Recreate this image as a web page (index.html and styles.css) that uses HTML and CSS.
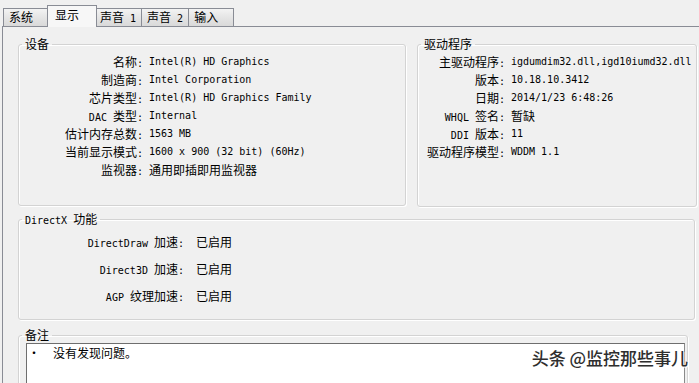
FILE: index.html
```html
<!DOCTYPE html>
<html lang="zh-CN">
<head>
    <meta charset="UTF-8">
    <title>DirectX 诊断工具 - 显示</title>
    <link rel="stylesheet" href="styles.css">
</head>
<body>

<div class="tabs">
    <div class="tab">系统</div>
    <div class="tab active">显示</div>
    <div class="tab">声音<span class="en"> 1</span></div>
    <div class="tab">声音<span class="en"> 2</span></div>
    <div class="tab">输入</div>
</div>

<div class="panel">
    <div class="top-row">
        <fieldset class="group device">
            <legend>设备</legend>
            <div class="rows">
                <div class="label">名称<span class="en">:</span></div>
                <div class="en">Intel(R) HD Graphics</div>
                <div class="label">制造商<span class="en">:</span></div>
                <div class="en">Intel Corporation</div>
                <div class="label">芯片类型<span class="en">:</span></div>
                <div class="en">Intel(R) HD Graphics Family</div>
                <div class="label"><span class="en">DAC </span>类型<span class="en">:</span></div>
                <div class="en">Internal</div>
                <div class="label">估计内存总数<span class="en">:</span></div>
                <div class="en">1563 MB</div>
                <div class="label">当前显示模式<span class="en">:</span></div>
                <div class="en">1600 x 900 (32 bit) (60Hz)</div>
                <div class="label">监视器<span class="en">:</span></div>
                <div>通用即插即用监视器</div>
            </div>
        </fieldset>

        <fieldset class="group driver">
            <legend>驱动程序</legend>
            <div class="rows">
                <div class="label">主驱动程序<span class="en">:</span></div>
                <div class="en">igdumdim32.dll,igd10iumd32.dll</div>
                <div class="label">版本<span class="en">:</span></div>
                <div class="en">10.18.10.3412</div>
                <div class="label">日期<span class="en">:</span></div>
                <div class="en">2014/1/23 6:48:26</div>
                <div class="label"><span class="en">WHQL </span>签名<span class="en">:</span></div>
                <div>暂缺</div>
                <div class="label"><span class="en">DDI </span>版本<span class="en">:</span></div>
                <div class="en">11</div>
                <div class="label">驱动程序模型<span class="en">:</span></div>
                <div class="en">WDDM 1.1</div>
            </div>
        </fieldset>
    </div>

    <fieldset class="group directx">
        <legend><span class="en">DirectX </span>功能</legend>
        <div class="rows">
            <div class="label"><span class="en">DirectDraw </span>加速<span class="en">:</span></div>
            <div>已启用</div>
            <div class="label"><span class="en">Direct3D </span>加速<span class="en">:</span></div>
            <div>已启用</div>
            <div class="label"><span class="en">AGP </span>纹理加速<span class="en">:</span></div>
            <div>已启用</div>
        </div>
    </fieldset>

    <fieldset class="group notes">
        <legend>备注</legend>
        <div class="notes-box">
            <div class="note"><span class="bullet">•</span>没有发现问题。</div>
        </div>
    </fieldset>
</div>

<div class="watermark">头条 @监控那些事儿</div>

</body>
</html>
```

FILE: styles.css
```css
body {
    margin: 0;
    background-color: #f0f0f0;
    font-family: "Noto Sans CJK SC", sans-serif;
    font-size: 12px;
    color: #000;
    overflow: hidden;
}

.en {
    font-family: "DejaVu Sans Mono", monospace;
    font-size: 10px;
}

span.en {
    line-height: 0;
}

/* tab strip */

.tabs {
    display: flex;
    align-items: flex-end;
    height: 26px;
    padding-left: 4px;
}

.tab {
    height: 17px;
    line-height: 16px;
    min-width: 34px;
    padding: 0 5px;
    margin-left: -1px;
    border: 1px solid #898c95;
    border-bottom: 0;
    background: linear-gradient(#f3f3f3, #e6e6e6 45%, #d9d9d9);
}

.tab.active {
    position: relative;
    z-index: 1;
    height: 21px;
    line-height: 18px;
    padding: 0 7px;
    margin: 0 -2px -1px -2px;
    background: #f7f7f7;
}

/* main panel */

.panel {
    margin-left: 2px;
    border-top: 1px solid #898c95;
    border-left: 1px solid #898c95;
    padding: 10px 0 0 15px;
    height: 400px;
}

.top-row {
    display: flex;
    gap: 11px;
}

.group {
    margin: 0;
    padding: 0;
    border: 1px solid #d3d3d3;
    border-radius: 3px;
    box-shadow: 1px 1px 0 #fff, inset 1px 1px 0 #fff;
}

.group legend {
    margin-left: 3px;
    padding: 0 3px;
    line-height: 14px;
}

.rows {
    display: grid;
    grid-auto-rows: 18px;
    line-height: 18px;
    white-space: nowrap;
}

.label {
    text-align: right;
}

.device {
    width: 386px;
    height: 167px;
}

.device .rows {
    grid-template-columns: 124px auto;
    column-gap: 6px;
    padding-top: 2px;
}

.driver {
    width: 278px;
    height: 168px;
}

.driver .rows {
    grid-template-columns: 87px auto;
    column-gap: 6px;
    padding-top: 2px;
    overflow: hidden;
}

.directx {
    width: 675px;
    height: 106px;
    margin-top: 5px;
}

.directx .rows {
    grid-template-columns: 165px auto;
    grid-auto-rows: 27px;
    column-gap: 12px;
    line-height: 27px;
    padding-top: 2px;
}

.notes {
    width: 668px;
    height: 80px;
    margin-top: 8px;
}

.notes-box {
    margin: 1px 2px 0 7px;
    height: 60px;
    background: #fff;
    border: 1px solid #6e6e6e;
    border-right-color: #8a8a8a;
}

.note {
    line-height: 18px;
    padding-left: 1px;
}

.bullet {
    display: inline-block;
    width: 25px;
}

.watermark {
    position: absolute;
    right: 11px;
    top: 345px;
    font-size: 17px;
    font-weight: 500;
    color: #2e2e2e;
    text-shadow: 0 0 2px #fff, 1px 1px 0 #fff;
}
```
